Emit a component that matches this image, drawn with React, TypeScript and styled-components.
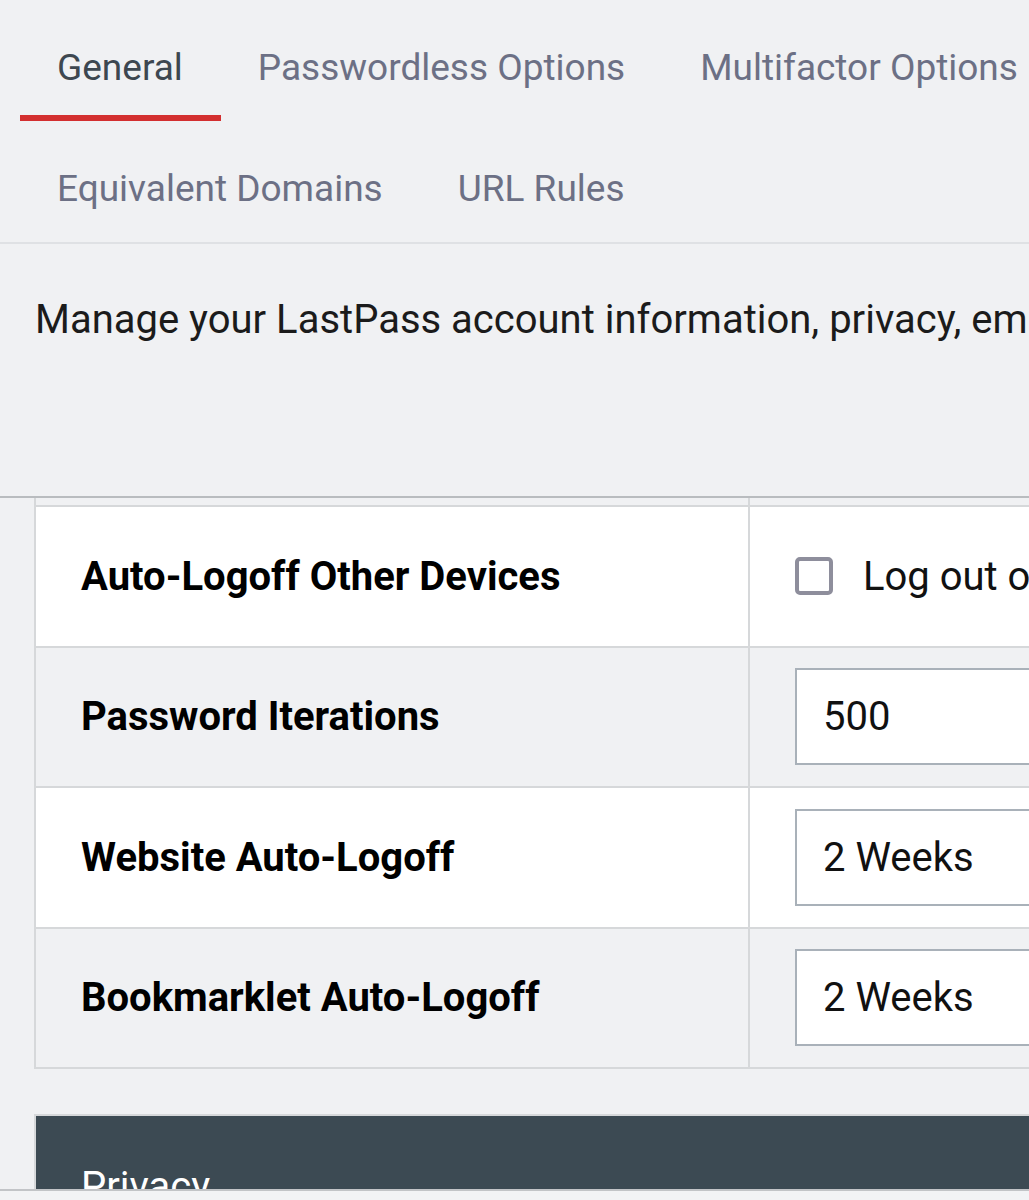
import React from "react";
import styled, { createGlobalStyle } from "styled-components";

interface settingRowType {
  label: string;
  kind: "checkbox" | "input" | "select";
  value: string;
}

const TABS = [
  "General",
  "Passwordless Options",
  "Multifactor Options",
  "Equivalent Domains",
  "URL Rules",
];

const DESCRIPTION =
  "Manage your LastPass account information, privacy, email and security settings.";

const rows: settingRowType[] = [
  { label: "Auto-Logoff Other Devices", kind: "checkbox", value: "Log out of all other devices" },
  { label: "Password Iterations", kind: "input", value: "500" },
  { label: "Website Auto-Logoff", kind: "select", value: "2 Weeks" },
  { label: "Bookmarklet Auto-Logoff", kind: "select", value: "2 Weeks" },
];

const GlobalStyle = createGlobalStyle`
  html, body {
    margin: 0;
    padding: 0;
    background: #f0f1f3;
    overflow: hidden;
  }
  * {
    box-sizing: border-box;
  }
`;

const App = () => {
  return (
    <Page>
      <GlobalStyle />
      <TabBar>
        {TABS.map((tab, idx) => (
          <Tab key={tab} active={idx === 0}>
            {tab}
          </Tab>
        ))}
      </TabBar>
      <Description>{DESCRIPTION}</Description>
      <ScrollArea>
        <Table>
          {/* 스크롤로 잘린 이전 행 */}
          <CutLabel />
          <CutValue />
          {rows.map((row, idx) => (
            <React.Fragment key={row.label}>
              <LabelCell shaded={idx % 2 === 1}>{row.label}</LabelCell>
              <ValueCell shaded={idx % 2 === 1}>
                {row.kind === "checkbox" ? (
                  <CheckLabel>
                    <CheckBox />
                    {row.value}
                  </CheckLabel>
                ) : (
                  <Field>{row.value}</Field>
                )}
              </ValueCell>
            </React.Fragment>
          ))}
        </Table>
        <SectionHeader>Privacy</SectionHeader>
      </ScrollArea>
      <Footer />
    </Page>
  );
};

export default App;

const Page = styled.div`
  width: 1180px;
  font-family: Roboto, "Liberation Sans", sans-serif;
  background: #f0f1f3;
`;

const TabBar = styled.div`
  display: flex;
  flex-wrap: wrap;
  padding-left: 20px;
  border-bottom: 2px solid #dfe1e4;
`;

const Tab = styled.div<{ active?: boolean }>`
  padding: 47px 38px 25px 37px;
  height: 121px;
  font-size: 37px;
  line-height: 42px;
  white-space: nowrap;
  color: ${(p) => (p.active ? "#3d4750" : "#6c7085")};
  border-bottom: 6px solid ${(p) => (p.active ? "#d32f2f" : "transparent")};
`;

const Description = styled.p`
  margin: 0;
  height: 254px;
  padding: 52px 0 0 35px;
  font-size: 40px;
  line-height: 47px;
  color: #1b1b1b;
  white-space: nowrap;
  border-bottom: 2px solid #b9bcbf;
`;

const ScrollArea = styled.div`
  height: 691px;
  overflow: hidden;
  padding-left: 34px;
`;

const Table = styled.div`
  display: grid;
  grid-template-columns: 714px 1fr;
  border-left: 2px solid #d6d8da;
`;

const CutLabel = styled.div`
  height: 9px;
  background: #f0f1f3;
  border-bottom: 2px solid #d6d8da;
  border-right: 2px solid #d6d8da;
`;

const CutValue = styled.div`
  height: 9px;
  background: #f0f1f3;
  border-bottom: 2px solid #d6d8da;
`;

const LabelCell = styled.div<{ shaded?: boolean }>`
  height: 140.5px;
  display: flex;
  align-items: center;
  padding-left: 45px;
  font-size: 40px;
  font-weight: 700;
  color: #000;
  background: ${(p) => (p.shaded ? "#f0f1f3" : "#ffffff")};
  border-bottom: 2px solid #d6d8da;
  border-right: 2px solid #d6d8da;
`;

const ValueCell = styled.div<{ shaded?: boolean }>`
  height: 140.5px;
  display: flex;
  align-items: center;
  padding-left: 45px;
  background: ${(p) => (p.shaded ? "#f0f1f3" : "#ffffff")};
  border-bottom: 2px solid #d6d8da;
`;

const CheckLabel = styled.label`
  display: flex;
  align-items: center;
  gap: 30px;
  font-size: 40px;
  color: #111;
  white-space: nowrap;
`;

const CheckBox = styled.span`
  width: 38px;
  height: 38px;
  border: 4px solid #8e8e9c;
  border-radius: 5px;
  background: #fff;
`;

const Field = styled.div`
  width: 420px;
  height: 97px;
  display: flex;
  align-items: center;
  padding-left: 26px;
  background: #fff;
  border: 2px solid #a9b1b9;
  font-size: 40px;
  color: #111;
`;

const SectionHeader = styled.div`
  margin-top: 45px;
  height: 140px;
  padding: 47px 0 0 45px;
  background: #3c4a53;
  border-top: 2px solid #d6d8da;
  border-left: 2px solid #d6d8da;
  color: #fff;
  font-size: 40px;
  line-height: 47px;
`;

const Footer = styled.div`
  height: 40px;
  background: #f2f3f5;
  border-top: 2px solid #c2c4c7;
`;
